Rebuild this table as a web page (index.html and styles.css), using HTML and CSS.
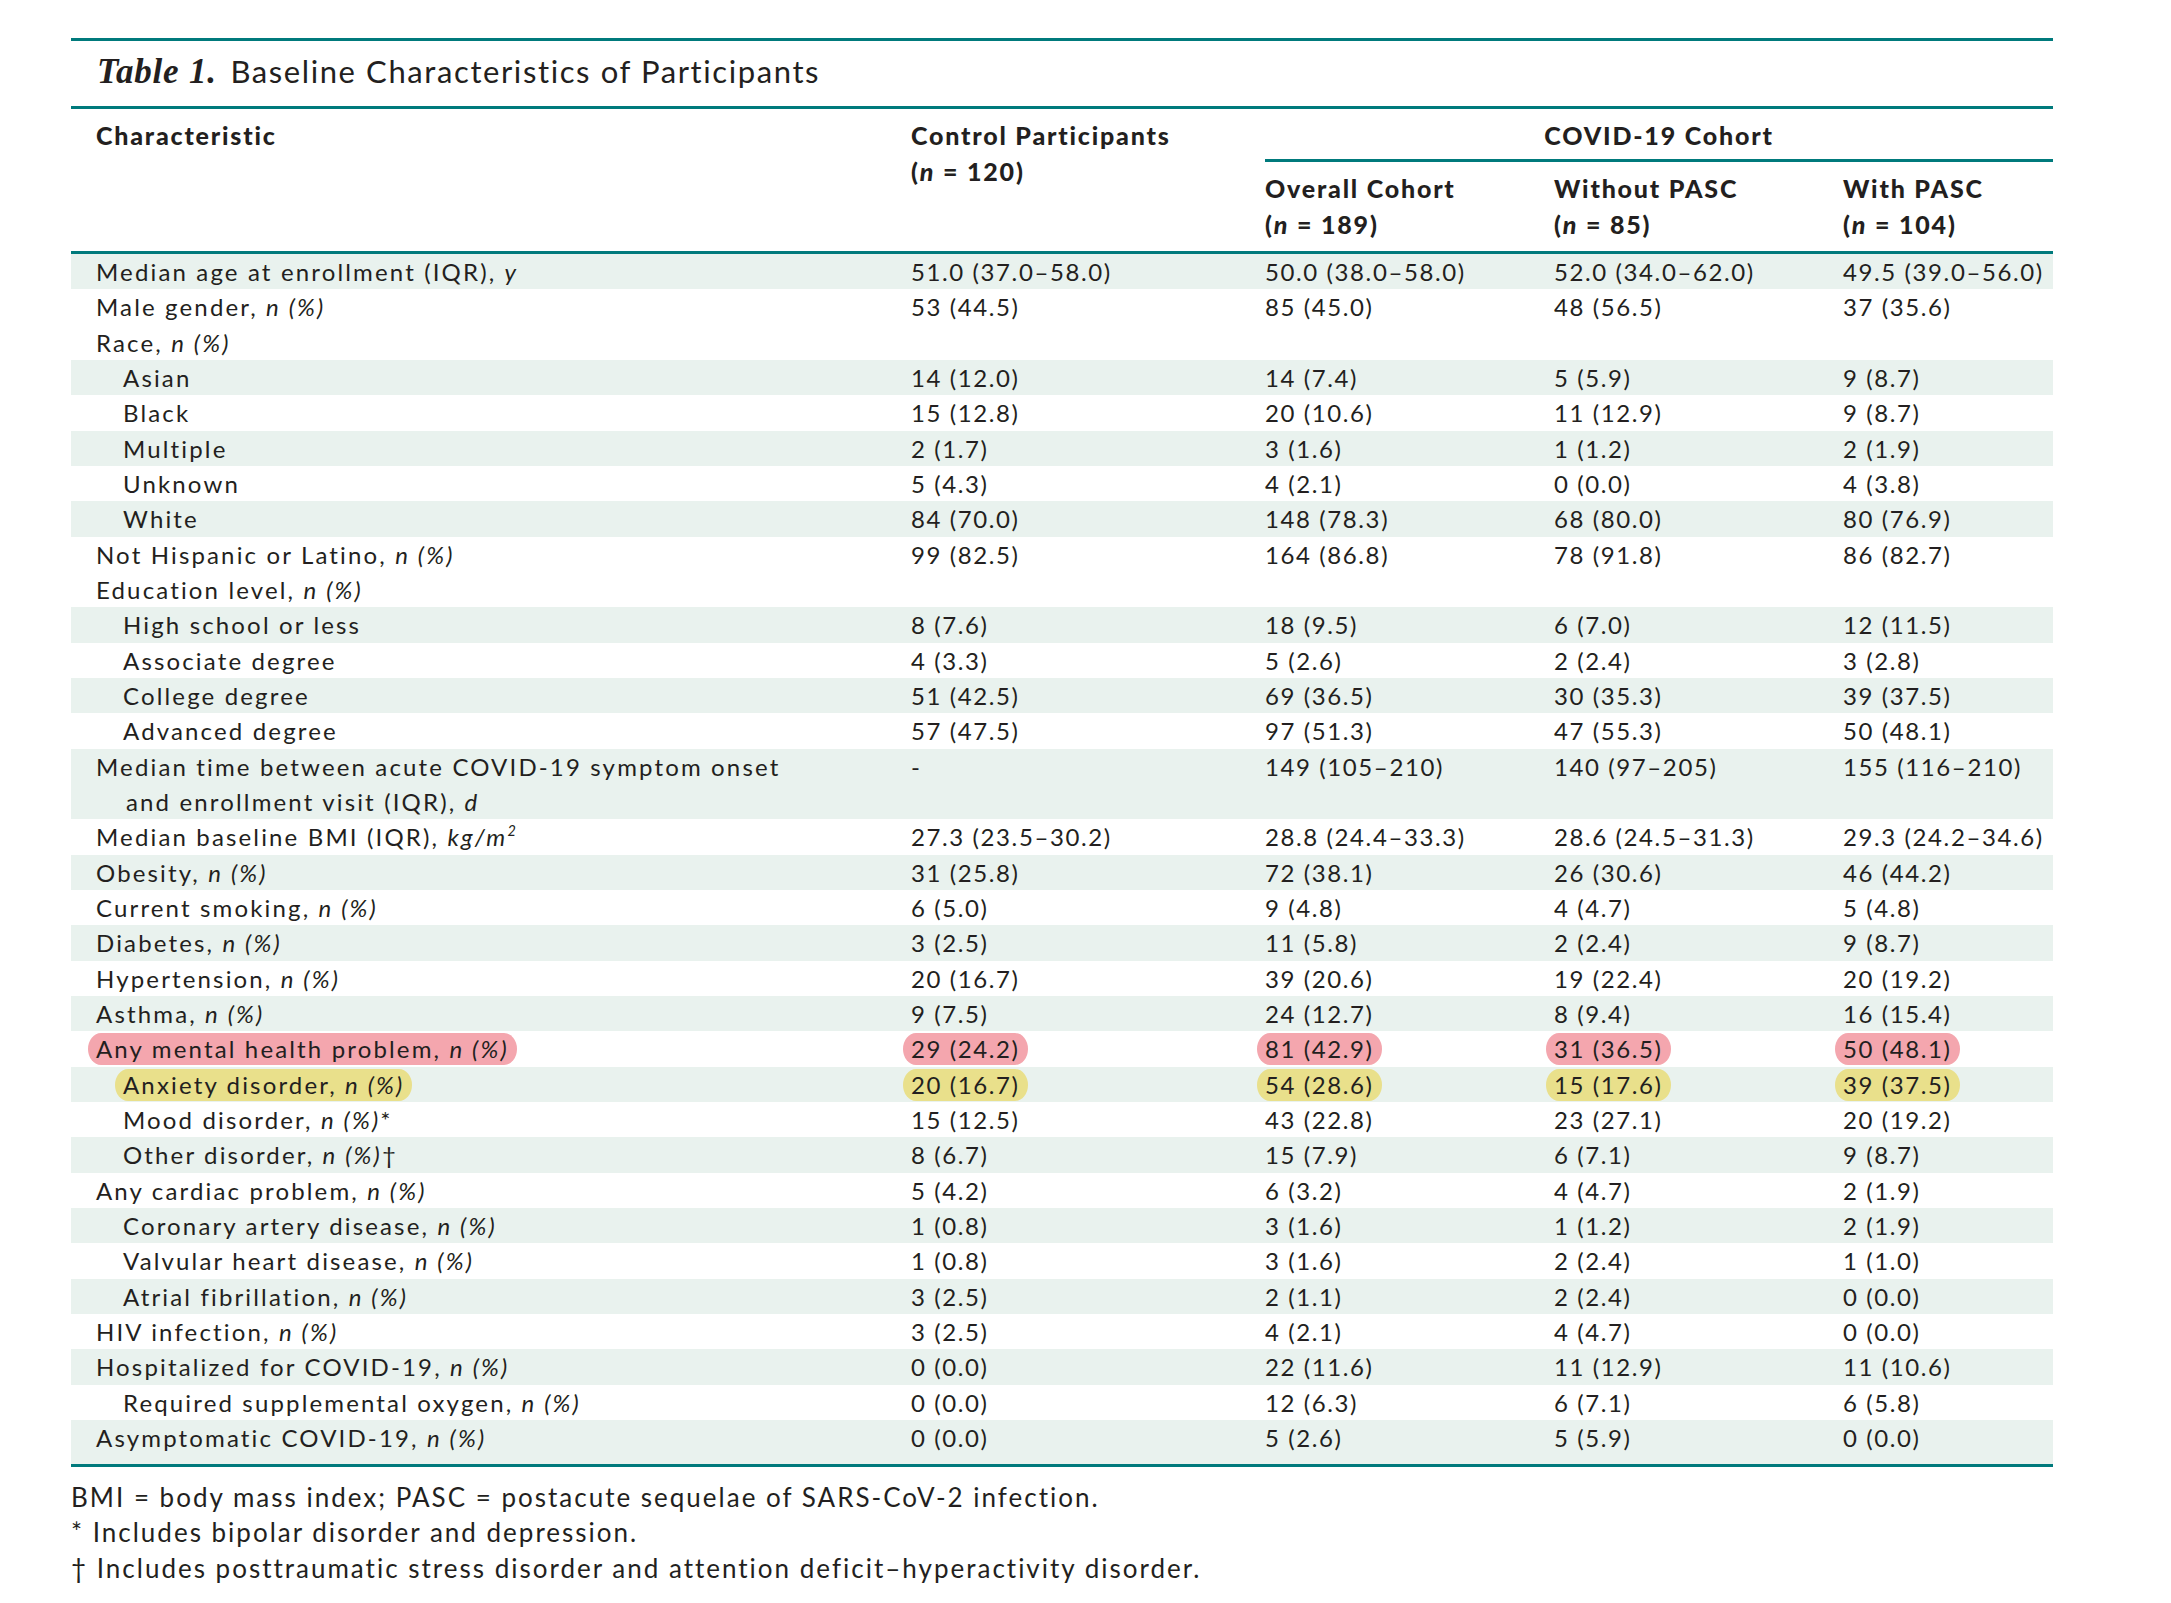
FILE: index.html
```html
<!DOCTYPE html>
<html lang="en">
<head>
<meta charset="utf-8">
<title>Table 1. Baseline Characteristics of Participants</title>
<link rel="stylesheet" href="styles.css">
</head>
<body>
<div class="page">
  <div class="title"><span class="tnum">Table 1.</span> <span class="ttext">Baseline Characteristics of Participants</span></div>
  <table class="bt">
    <colgroup><col class="c1"><col class="c2"><col class="c3"><col class="c4"><col class="c5"></colgroup>
    <thead>
      <tr class="h1">
        <th rowspan="2" class="first">Characteristic</th>
        <th rowspan="2">Control Participants<br>(<i>n</i> = 120)</th>
        <th colspan="3" class="span">COVID-19 Cohort</th>
      </tr>
      <tr class="h2">
        <th>Overall Cohort<br>(<i>n</i> = 189)</th>
        <th>Without PASC<br>(<i>n</i> = 85)</th>
        <th>With PASC<br>(<i>n</i> = 104)</th>
      </tr>
    </thead>
    <tbody>
      <tr class="s"><td>Median age at enrollment (IQR), <i>y</i></td><td>51.0 (37.0–58.0)</td><td>50.0 (38.0–58.0)</td><td>52.0 (34.0–62.0)</td><td>49.5 (39.0–56.0)</td></tr>
      <tr><td>Male gender, <i>n (%)</i></td><td>53 (44.5)</td><td>85 (45.0)</td><td>48 (56.5)</td><td>37 (35.6)</td></tr>
      <tr><td>Race, <i>n (%)</i></td><td></td><td></td><td></td><td></td></tr>
      <tr class="s"><td class="sub">Asian</td><td>14 (12.0)</td><td>14 (7.4)</td><td>5 (5.9)</td><td>9 (8.7)</td></tr>
      <tr><td class="sub">Black</td><td>15 (12.8)</td><td>20 (10.6)</td><td>11 (12.9)</td><td>9 (8.7)</td></tr>
      <tr class="s"><td class="sub">Multiple</td><td>2 (1.7)</td><td>3 (1.6)</td><td>1 (1.2)</td><td>2 (1.9)</td></tr>
      <tr><td class="sub">Unknown</td><td>5 (4.3)</td><td>4 (2.1)</td><td>0 (0.0)</td><td>4 (3.8)</td></tr>
      <tr class="s"><td class="sub">White</td><td>84 (70.0)</td><td>148 (78.3)</td><td>68 (80.0)</td><td>80 (76.9)</td></tr>
      <tr><td>Not Hispanic or Latino, <i>n (%)</i></td><td>99 (82.5)</td><td>164 (86.8)</td><td>78 (91.8)</td><td>86 (82.7)</td></tr>
      <tr><td>Education level, <i>n (%)</i></td><td></td><td></td><td></td><td></td></tr>
      <tr class="s"><td class="sub">High school or less</td><td>8 (7.6)</td><td>18 (9.5)</td><td>6 (7.0)</td><td>12 (11.5)</td></tr>
      <tr><td class="sub">Associate degree</td><td>4 (3.3)</td><td>5 (2.6)</td><td>2 (2.4)</td><td>3 (2.8)</td></tr>
      <tr class="s"><td class="sub">College degree</td><td>51 (42.5)</td><td>69 (36.5)</td><td>30 (35.3)</td><td>39 (37.5)</td></tr>
      <tr><td class="sub">Advanced degree</td><td>57 (47.5)</td><td>97 (51.3)</td><td>47 (55.3)</td><td>50 (48.1)</td></tr>
      <tr class="s"><td class="wrap">Median time between acute COVID-19 symptom onset<br>and enrollment visit (IQR), <i>d</i></td><td>-</td><td>149 (105–210)</td><td>140 (97–205)</td><td>155 (116–210)</td></tr>
      <tr><td>Median baseline BMI (IQR), <i>kg/m<sup>2</sup></i></td><td>27.3 (23.5–30.2)</td><td>28.8 (24.4–33.3)</td><td>28.6 (24.5–31.3)</td><td>29.3 (24.2–34.6)</td></tr>
      <tr class="s"><td>Obesity, <i>n (%)</i></td><td>31 (25.8)</td><td>72 (38.1)</td><td>26 (30.6)</td><td>46 (44.2)</td></tr>
      <tr><td>Current smoking, <i>n (%)</i></td><td>6 (5.0)</td><td>9 (4.8)</td><td>4 (4.7)</td><td>5 (4.8)</td></tr>
      <tr class="s"><td>Diabetes, <i>n (%)</i></td><td>3 (2.5)</td><td>11 (5.8)</td><td>2 (2.4)</td><td>9 (8.7)</td></tr>
      <tr><td>Hypertension, <i>n (%)</i></td><td>20 (16.7)</td><td>39 (20.6)</td><td>19 (22.4)</td><td>20 (19.2)</td></tr>
      <tr class="s"><td>Asthma, <i>n (%)</i></td><td>9 (7.5)</td><td>24 (12.7)</td><td>8 (9.4)</td><td>16 (15.4)</td></tr>
      <tr><td><span class="hl pink">Any mental health problem, <i>n (%)</i></span></td><td><span class="hl pink">29 (24.2)</span></td><td><span class="hl pink">81 (42.9)</span></td><td><span class="hl pink">31 (36.5)</span></td><td><span class="hl pink">50 (48.1)</span></td></tr>
      <tr class="s"><td class="sub"><span class="hl yellow">Anxiety disorder, <i>n (%)</i></span></td><td><span class="hl yellow">20 (16.7)</span></td><td><span class="hl yellow">54 (28.6)</span></td><td><span class="hl yellow">15 (17.6)</span></td><td><span class="hl yellow">39 (37.5)</span></td></tr>
      <tr><td class="sub">Mood disorder, <i>n (%)</i>*</td><td>15 (12.5)</td><td>43 (22.8)</td><td>23 (27.1)</td><td>20 (19.2)</td></tr>
      <tr class="s"><td class="sub">Other disorder, <i>n (%)</i>†</td><td>8 (6.7)</td><td>15 (7.9)</td><td>6 (7.1)</td><td>9 (8.7)</td></tr>
      <tr><td>Any cardiac problem, <i>n (%)</i></td><td>5 (4.2)</td><td>6 (3.2)</td><td>4 (4.7)</td><td>2 (1.9)</td></tr>
      <tr class="s"><td class="sub">Coronary artery disease, <i>n (%)</i></td><td>1 (0.8)</td><td>3 (1.6)</td><td>1 (1.2)</td><td>2 (1.9)</td></tr>
      <tr><td class="sub">Valvular heart disease, <i>n (%)</i></td><td>1 (0.8)</td><td>3 (1.6)</td><td>2 (2.4)</td><td>1 (1.0)</td></tr>
      <tr class="s"><td class="sub">Atrial fibrillation, <i>n (%)</i></td><td>3 (2.5)</td><td>2 (1.1)</td><td>2 (2.4)</td><td>0 (0.0)</td></tr>
      <tr><td>HIV infection, <i>n (%)</i></td><td>3 (2.5)</td><td>4 (2.1)</td><td>4 (4.7)</td><td>0 (0.0)</td></tr>
      <tr class="s"><td>Hospitalized for COVID-19, <i>n (%)</i></td><td>0 (0.0)</td><td>22 (11.6)</td><td>11 (12.9)</td><td>11 (10.6)</td></tr>
      <tr><td class="sub">Required supplemental oxygen, <i>n (%)</i></td><td>0 (0.0)</td><td>12 (6.3)</td><td>6 (7.1)</td><td>6 (5.8)</td></tr>
      <tr class="s last"><td>Asymptomatic COVID-19, <i>n (%)</i></td><td>0 (0.0)</td><td>5 (2.6)</td><td>5 (5.9)</td><td>0 (0.0)</td></tr>
    </tbody>
  </table>
  <div class="notes">
    <p>BMI = body mass index; PASC = postacute sequelae of SARS-CoV-2 infection.</p>
    <p>* Includes bipolar disorder and depression.</p>
    <p>† Includes posttraumatic stress disorder and attention deficit–hyperactivity disorder.</p>
  </div>
</div>
</body>
</html>
```

FILE: styles.css
```css
html, body {
  margin: 0;
  padding: 0;
  background: #ffffff;
}

body {
  font-family: "Lato", "Noto Sans", sans-serif;
  color: #231f20;
}

.page {
  padding: 38px 0 0 71px;
  width: 1982px;
}

.title {
  width: 1982px;
  border-top: 3px solid #007a7c;
  border-bottom: 3px solid #007a7c;
  padding: 10px 0 15px 26px;
  box-sizing: border-box;
  height: 71px;
  font-size: 31px;
  line-height: 40px;
  letter-spacing: 1.6px;
  white-space: nowrap;
}

.tnum {
  font-family: "Liberation Serif", "DejaVu Serif", serif;
  font-style: italic;
  font-weight: bold;
  font-size: 35px;
  letter-spacing: 0.8px;
  margin-right: 4px;
}

.bt {
  width: 1982px;
  table-layout: fixed;
  border-collapse: separate;
  border-spacing: 0;
  font-size: 24px;
  letter-spacing: 1.6px;
}

.c1 { width: 840px; }
.c2 { width: 354px; }
.c3 { width: 289px; }
.c4 { width: 289px; }
.c5 { width: 210px; }

.bt th {
  text-align: left;
  vertical-align: top;
  font-weight: 900;
  font-size: 25px;
  line-height: 36px;
  letter-spacing: 1.8px;
  padding: 0;
  white-space: nowrap;
}

.h1 th {
  padding-top: 8px;
  border-bottom: 3px solid #007a7c;
}

.h1 th.span {
  text-align: center;
  padding-bottom: 6px;
}

.h2 th {
  padding-top: 8px;
  padding-bottom: 9px;
  border-bottom: 3px solid #007a7c;
}

.bt th.first {
  padding-left: 25px;
}

.bt td {
  padding: 0;
  line-height: 35.33px;
  vertical-align: top;
  white-space: nowrap;
}

.bt td:first-child {
  padding-left: 25px;
  letter-spacing: 2.15px;
}

.bt td.sub {
  padding-left: 52px;
}

.bt td.wrap {
  padding-left: 55px;
  text-indent: -30px;
}

.bt tr.s td {
  background: #e9f2ee;
}

.bt tr.last td {
  padding-bottom: 9px;
  border-bottom: 3px solid #007a7c;
}

.bt sup {
  font-size: 0.6em;
  line-height: 0;
  vertical-align: 0.7em;
}

.hl {
  display: inline-block;
  line-height: 32px;
  padding: 0 8px;
  margin-left: -8px;
  border-radius: 13px / 16px;
}

.pink {
  background: #f4a6ae;
}

.yellow {
  background: #e9e08b;
}

.notes {
  padding-top: 13px;
  font-size: 26px;
  line-height: 35.33px;
  letter-spacing: 2px;
}

.notes p {
  margin: 0;
  white-space: nowrap;
}
```
